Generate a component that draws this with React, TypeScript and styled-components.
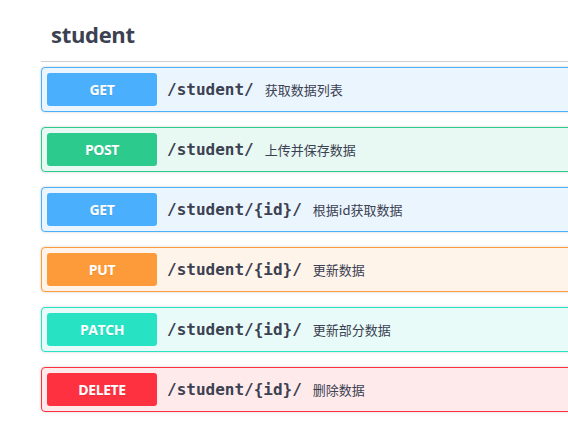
import React from "react";
import styled, { createGlobalStyle } from "styled-components";

const Global = createGlobalStyle`
  html, body { margin: 0; padding: 0; background: #fff; }
`;

type Method = "get" | "post" | "put" | "patch" | "delete";

const palette: Record<Method, { main: string; bg: string }> = {
  get: { main: "#4aaffd", bg: "#ebf5fe" },
  post: { main: "#2dca8e", bg: "#e8f8f2" },
  put: { main: "#fd9b3a", bg: "#fff4ea" },
  patch: { main: "#27e3c4", bg: "#e8fbf8" },
  delete: { main: "#fe3141", bg: "#ffeaeb" },
};

const Viewport = styled.div`
  width: 568px;
  height: 426px;
  overflow: hidden;
`;

const Page = styled.div`
  width: 600px;
  padding: 6px 0 0 41px;
  font-family: "Open Sans", "Noto Sans CJK SC", sans-serif;
  color: #3b4151;
`;

const TagHeader = styled.h3`
  margin: 0 0 5px;
  padding: 10px 20px 10px 10px;
  height: 35px;
  display: flex;
  align-items: center;
  font-family: "Open Sans", sans-serif;
  font-size: 22px;
  font-weight: 700;
  letter-spacing: -0.3px;
  color: #3b4151;
  border-bottom: 1px solid #cdcfd3;
`;

const List = styled.div`
  display: flex;
  flex-direction: column;
  gap: 15px;
`;

const Block = styled.div<{ $m: Method }>`
  display: flex;
  align-items: center;
  padding: 5px;
  border: 1px solid ${(p) => palette[p.$m].main};
  border-radius: 4px;
  background: ${(p) => palette[p.$m].bg};
  box-shadow: 0 0 3px rgba(0, 0, 0, 0.19);
`;

const Badge = styled.span<{ $m: Method }>`
  width: 110px;
  height: 33px;
  flex: none;
  display: flex;
  align-items: center;
  justify-content: center;
  border-radius: 3px;
  background: ${(p) => palette[p.$m].main};
  color: #fff;
  font-family: "Open Sans", sans-serif;
  font-size: 14px;
  font-weight: 700;
  letter-spacing: -0.4px;
  text-shadow: 0 1px 0 rgba(0, 0, 0, 0.1);
`;

const Path = styled.span`
  padding: 0 11px 0 10px;
  font-family: "DejaVu Sans Mono", monospace;
  font-size: 16px;
  font-weight: 700;
  color: #3b4151;
`;

const Desc = styled.span`
  font-family: "Noto Sans CJK SC", "Open Sans", sans-serif;
  font-size: 13px;
  color: #3b4151;
`;

const ops: { m: Method; path: string; desc: string }[] = [
  { m: "get", path: "/student/", desc: "获取数据列表" },
  { m: "post", path: "/student/", desc: "上传并保存数据" },
  { m: "get", path: "/student/{id}/", desc: "根据id获取数据" },
  { m: "put", path: "/student/{id}/", desc: "更新数据" },
  { m: "patch", path: "/student/{id}/", desc: "更新部分数据" },
  { m: "delete", path: "/student/{id}/", desc: "删除数据" },
];

export default function App() {
  return (
    <>
      <Global />
      <Viewport>
        <Page>
          <TagHeader>student</TagHeader>
          <List>
            {ops.map((o, i) => (
              <Block key={i} $m={o.m}>
                <Badge $m={o.m}>{o.m.toUpperCase()}</Badge>
                <Path>{o.path}</Path>
                <Desc>{o.desc}</Desc>
              </Block>
            ))}
          </List>
        </Page>
      </Viewport>
    </>
  );
}
